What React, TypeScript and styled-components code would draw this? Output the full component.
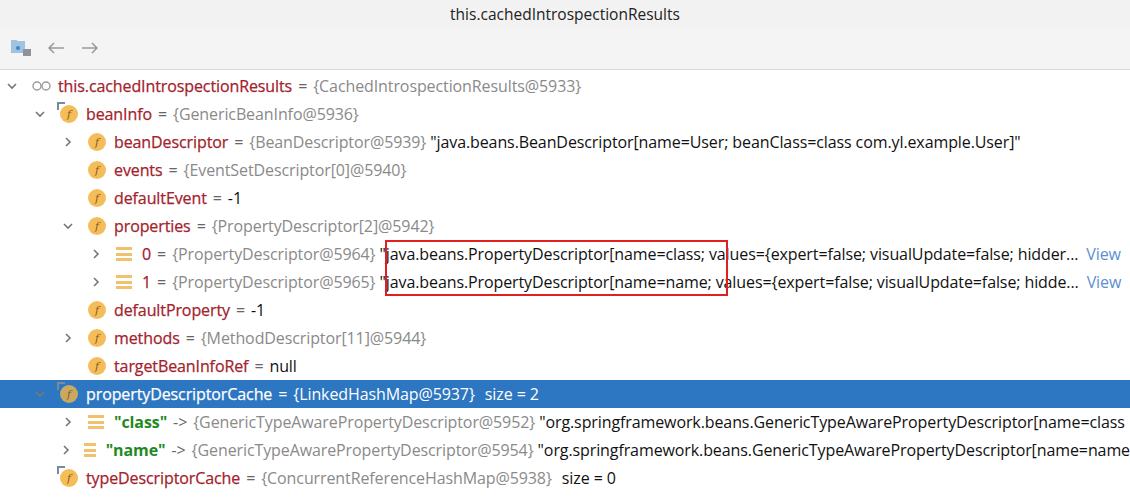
import React from "react";
import styled, { createGlobalStyle } from "styled-components";

const G = createGlobalStyle`
  html,body{margin:0;padding:0;background:#fff;}
  body{font-family:"Open Sans","Noto Sans",sans-serif;}
`;
const Wrap = styled.div`width:1130px;height:504px;overflow:hidden;display:flex;flex-direction:column;`;
const Title = styled.div`height:27px;background:#f2f2f2;display:flex;align-items:center;justify-content:center;font-size:15.5px;color:#222;`;
const Toolbar = styled.div`height:42px;background:#f4f4f4;border-bottom:1px solid #d9d9d9;display:flex;align-items:center;gap:14px;padding:0 10px;`;
const Tree = styled.div`position:relative;padding-top:2px;flex:1;`;
const Row = styled.div<{ $l: number; $sel?: boolean }>`
  height:28px;display:flex;align-items:center;white-space:nowrap;overflow:hidden;
  padding-left:${p => 4 + p.$l * 28}px;font-size:16px;letter-spacing:-0.1px;
  background:${p => (p.$sel ? "#2d76c1" : "transparent")};
  color:${p => (p.$sel ? "#fff" : "#111")};
`;
const Arrow = styled.span`width:16px;display:flex;justify-content:center;margin-right:12px;color:#777;`;
const FIcon = styled.span<{ $sel?: boolean }>`
  position:relative;width:18px;height:18px;border-radius:50%;background:${p => (p.$sel ? "#c9a862" : "#f5bd5a")};
  color:#8a5a12;font-size:11px;display:flex;align-items:center;justify-content:center;margin-right:8px;flex-shrink:0;
  font-family:"DejaVu Serif",serif;font-style:italic;
`;
const Mark = styled.span`position:absolute;left:-3px;top:-3px;width:6px;height:6px;border-left:2px solid #7a8a99;border-top:2px solid #7a8a99;`;
const ListIcon = styled.span`width:16px;height:16px;margin-right:10px;display:flex;flex-direction:column;justify-content:space-between;padding:1px 0;box-sizing:border-box;
  & > i{display:block;height:3px;background:#f2c16d;}`;
const Name = styled.span<{ $sel?: boolean }>`color:${p => (p.$sel ? "#fff" : "#a3222c")};-webkit-text-stroke:0.25px currentColor;`;
const Key = styled.span`color:#1f8a1f;font-weight:700;`;
const Eq = styled.span<{ $sel?: boolean }>`color:${p => (p.$sel ? "#fff" : "#666")};margin:0 6px;`;
const Gray = styled.span<{ $sel?: boolean }>`color:${p => (p.$sel ? "#fff" : "#8a8a8a")};`;
const Str = styled.span`color:#111;margin-left:4px;`;
const Link = styled.span`color:#5c8fd0;margin-left:8px;`;
const RedBox = styled.div`position:absolute;left:385px;top:170px;width:343px;height:56px;border:2px solid #e02020;box-sizing:border-box;`;
const OO = styled.svg`margin-left:0;margin-right:6px;`;

const Chev = ({ open }: { open?: boolean }) => (
  <svg width="12" height="12" viewBox="0 0 12 12">
    <path d={open ? "M2 4l4 4 4-4" : "M4 2l4 4-4 4"} fill="none" stroke="#777" strokeWidth="1.6" />
  </svg>
);

type R = { l: number; a?: "o" | "c"; icon: "f" | "fm" | "oo" | "list"; name: React.ReactNode; key?: boolean; op?: string; gray?: string; val?: string; str?: string; link?: boolean; sel?: boolean };
const rows: R[] = [
  { l: 0, a: "o", icon: "oo", name: "this.cachedIntrospectionResults", gray: "{CachedIntrospectionResults@5933}" },
  { l: 1, a: "o", icon: "fm", name: "beanInfo", gray: "{GenericBeanInfo@5936}" },
  { l: 2, a: "c", icon: "f", name: "beanDescriptor", gray: "{BeanDescriptor@5939}", str: "\"java.beans.BeanDescriptor[name=User; beanClass=class com.yl.example.User]\"" },
  { l: 2, icon: "f", name: "events", gray: "{EventSetDescriptor[0]@5940}" },
  { l: 2, icon: "f", name: "defaultEvent", val: "-1" },
  { l: 2, a: "o", icon: "f", name: "properties", gray: "{PropertyDescriptor[2]@5942}" },
  { l: 3, a: "c", icon: "list", name: "0", gray: "{PropertyDescriptor@5964}", str: "\"java.beans.PropertyDescriptor[name=class; values={expert=false; visualUpdate=false; hidder...", link: true },
  { l: 3, a: "c", icon: "list", name: "1", gray: "{PropertyDescriptor@5965}", str: "\"java.beans.PropertyDescriptor[name=name; values={expert=false; visualUpdate=false; hidde...", link: true },
  { l: 2, icon: "f", name: "defaultProperty", val: "-1" },
  { l: 2, a: "c", icon: "f", name: "methods", gray: "{MethodDescriptor[11]@5944}" },
  { l: 2, icon: "f", name: "targetBeanInfoRef", val: "null" },
  { l: 1, a: "o", icon: "fm", name: "propertyDescriptorCache", gray: "{LinkedHashMap@5937}", val: "size = 2", sel: true },
  { l: 2, a: "c", icon: "list", name: "\"class\"", key: true, op: "->", gray: "{GenericTypeAwarePropertyDescriptor@5952}", str: "\"org.springframework.beans.GenericTypeAwarePropertyDescriptor[name=class" },
  { l: 2, a: "c", icon: "list", name: "\"name\"", key: true, op: "->", gray: "{GenericTypeAwarePropertyDescriptor@5954}", str: "\"org.springframework.beans.GenericTypeAwarePropertyDescriptor[name=name" },
  { l: 1, icon: "fm", name: "typeDescriptorCache", gray: "{ConcurrentReferenceHashMap@5938}", val: "size = 0" },
];

export default function App() {
  return (
    <Wrap>
      <G />
      <Title>this.cachedIntrospectionResults</Title>
      <Toolbar>
        <svg width="22" height="18" viewBox="0 0 22 18">
          <rect x="1" y="2" width="14" height="12" fill="#9fc3e0" />
          <rect x="1" y="1" width="6" height="3" fill="#9fc3e0" />
          <circle cx="8" cy="9" r="2" fill="#3a86c8" />
          <rect x="13" y="10" width="8" height="7" fill="#8d9399" />
        </svg>
        <svg width="20" height="14" viewBox="0 0 20 14"><path d="M18 7H3M8 2L3 7l5 5" fill="none" stroke="#9a9a9a" strokeWidth="1.5" /></svg>
        <svg width="20" height="14" viewBox="0 0 20 14"><path d="M2 7h15M12 2l5 5-5 5" fill="none" stroke="#9a9a9a" strokeWidth="1.5" /></svg>
      </Toolbar>
      <Tree>
        {rows.map((r, i) => (
          <Row key={i} $l={r.l} $sel={r.sel}>
            <Arrow>{r.a && <Chev open={r.a === "o"} />}</Arrow>
            {r.icon === "oo" ? (
              <OO width="20" height="12" viewBox="0 0 20 12">
                <circle cx="5" cy="6" r="4" fill="none" stroke="#999" strokeWidth="1.4" />
                <circle cx="14" cy="6" r="4" fill="none" stroke="#999" strokeWidth="1.4" />
              </OO>
            ) : r.icon === "list" ? (
              <ListIcon><i /><i /><i /></ListIcon>
            ) : (
              <FIcon $sel={r.sel}>f{r.icon === "fm" && <Mark />}</FIcon>
            )}
            {r.key ? <Key>{r.name}</Key> : <Name $sel={r.sel}>{r.name}</Name>}
            <Eq $sel={r.sel}>{r.op ?? "="}</Eq>
            {r.gray && <Gray $sel={r.sel}>{r.gray}</Gray>}
            {r.val && <span style={{ marginLeft: r.gray ? 10 : 0 }}>{r.val}</span>}
            {r.str && <Str>{r.str}</Str>}
            {r.link && <Link>View</Link>}
          </Row>
        ))}
        <RedBox />
      </Tree>
    </Wrap>
  );
}
